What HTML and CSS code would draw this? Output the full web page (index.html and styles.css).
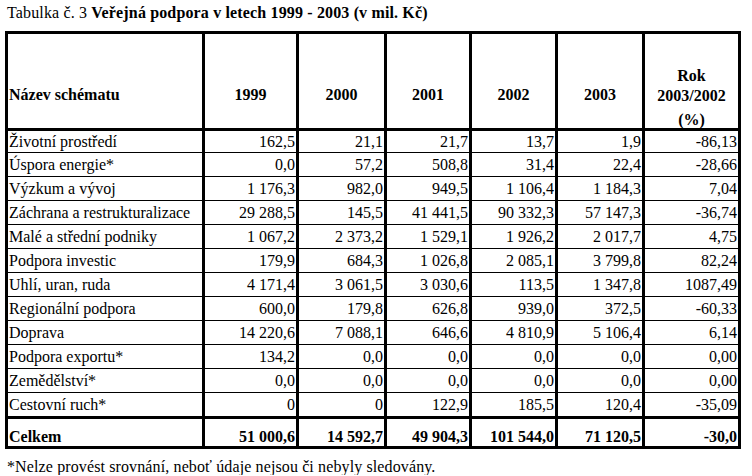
FILE: index.html
```html
<!DOCTYPE html>
<html lang="cs">
<head>
<meta charset="utf-8">
<title>Tabulka č. 3</title>
<link rel="stylesheet" href="styles.css">
</head>
<body>
<p class="caption">Tabulka č. 3 <b>Veřejná podpora v letech 1999 - 2003 (v mil. Kč)</b></p>
<table class="data">
  <colgroup>
    <col class="c-name"><col class="c-1999"><col class="c-2000"><col class="c-2001"><col class="c-2002"><col class="c-2003"><col class="c-rok">
  </colgroup>
  <thead>
    <tr class="head">
      <th class="name">Název schématu</th>
      <th>1999</th>
      <th>2000</th>
      <th>2001</th>
      <th>2002</th>
      <th>2003</th>
      <th class="rok"><span class="line">Rok</span><span class="line">2003/2002</span><span class="line pct">(%)</span></th>
    </tr>
  </thead>
  <tbody>
    <tr class="first"><td class="name">Životní prostředí</td><td>162,5</td><td>21,1</td><td>21,7</td><td>13,7</td><td>1,9</td><td>-86,13</td></tr>
    <tr><td class="name">Úspora energie*</td><td>0,0</td><td>57,2</td><td>508,8</td><td>31,4</td><td>22,4</td><td>-28,66</td></tr>
    <tr><td class="name">Výzkum a vývoj</td><td>1 176,3</td><td>982,0</td><td>949,5</td><td>1 106,4</td><td>1 184,3</td><td>7,04</td></tr>
    <tr><td class="name">Záchrana a restrukturalizace</td><td>29 288,5</td><td>145,5</td><td>41 441,5</td><td>90 332,3</td><td>57 147,3</td><td>-36,74</td></tr>
    <tr><td class="name">Malé a střední podniky</td><td>1 067,2</td><td>2 373,2</td><td>1 529,1</td><td>1 926,2</td><td>2 017,7</td><td>4,75</td></tr>
    <tr><td class="name">Podpora investic</td><td>179,9</td><td>684,3</td><td>1 026,8</td><td>2 085,1</td><td>3 799,8</td><td>82,24</td></tr>
    <tr><td class="name">Uhlí, uran, ruda</td><td>4 171,4</td><td>3 061,5</td><td>3 030,6</td><td>113,5</td><td>1 347,8</td><td>1087,49</td></tr>
    <tr><td class="name">Regionální podpora</td><td>600,0</td><td>179,8</td><td>626,8</td><td>939,0</td><td>372,5</td><td>-60,33</td></tr>
    <tr><td class="name">Doprava</td><td>14 220,6</td><td>7 088,1</td><td>646,6</td><td>4 810,9</td><td>5 106,4</td><td>6,14</td></tr>
    <tr><td class="name">Podpora exportu*</td><td>134,2</td><td>0,0</td><td>0,0</td><td>0,0</td><td>0,0</td><td>0,00</td></tr>
    <tr><td class="name">Zemědělství*</td><td>0,0</td><td>0,0</td><td>0,0</td><td>0,0</td><td>0,0</td><td>0,00</td></tr>
    <tr class="last"><td class="name">Cestovní ruch*</td><td>0</td><td>0</td><td>122,9</td><td>185,5</td><td>120,4</td><td>-35,09</td></tr>
  </tbody>
  <tfoot>
    <tr class="total"><th class="name">Celkem</th><td>51 000,6</td><td>14 592,7</td><td>49 904,3</td><td>101 544,0</td><td>71 120,5</td><td>-30,0</td></tr>
  </tfoot>
</table>
<p class="note">*Nelze provést srovnání, neboť údaje nejsou či nebyly sledovány.</p>
</body>
</html>
```

FILE: styles.css
```css
html, body {
  margin: 0;
  padding: 0;
  background: #ffffff;
}

body {
  padding: 0 0 0 5px;
  font-family: "Liberation Serif", "Times New Roman", serif;
  color: #000000;
}

.caption {
  margin: 0;
  padding: 4px 0 0 2px;
  height: 31px;
  box-sizing: border-box;
  font-size: 16px;
  line-height: 17px;
  letter-spacing: 0.15px;
}

.data {
  border-collapse: separate;
  border-spacing: 0;
  table-layout: fixed;
  width: 736px;
  border-top: 3px solid #000;
  border-left: 3px solid #000;
  font-size: 16px;
}

.c-name { width: 197px; }
.c-1999 { width: 94px; }
.c-2000 { width: 88px; }
.c-2001 { width: 85px; }
.c-2002 { width: 86px; }
.c-2003 { width: 87px; }
.c-rok { width: 96px; }

.data th,
.data td {
  box-sizing: border-box;
  border-right: 3px solid #000;
  border-bottom: 1px solid #000;
  padding: 0 1px 0 1px;
  white-space: nowrap;
  overflow: hidden;
}

.head th {
  height: 97px;
  border-bottom-width: 3px;
  vertical-align: bottom;
  text-align: center;
  font-weight: bold;
  font-size: 16px;
  line-height: 20px;
  padding-bottom: 23px;
}

.head th.name {
  text-align: left;
}

.head th.rok {
  padding-bottom: 0;
}

.rok .line {
  display: block;
}

.rok .pct {
  margin-top: 6px;
  line-height: 16px;
}

tbody td {
  height: 24px;
  text-align: right;
  vertical-align: middle;
  line-height: 18px;
  padding-top: 2px;
}

tbody tr.first td {
  height: 22px;
  padding-top: 0;
}

tbody td.name {
  text-align: left;
}

tbody tr.last td {
  height: 26px;
  border-bottom-width: 3px;
  padding-top: 1px;
}

.total th,
.total td {
  height: 30px;
  border-bottom-width: 3px;
  font-weight: bold;
  vertical-align: bottom;
  text-align: right;
  line-height: 18px;
  padding-bottom: 0;
}

.total th.name {
  text-align: left;
}

.note {
  margin: 0;
  padding: 9px 0 0 2px;
  font-size: 16px;
  line-height: 17px;
  letter-spacing: 0.12px;
}
```
